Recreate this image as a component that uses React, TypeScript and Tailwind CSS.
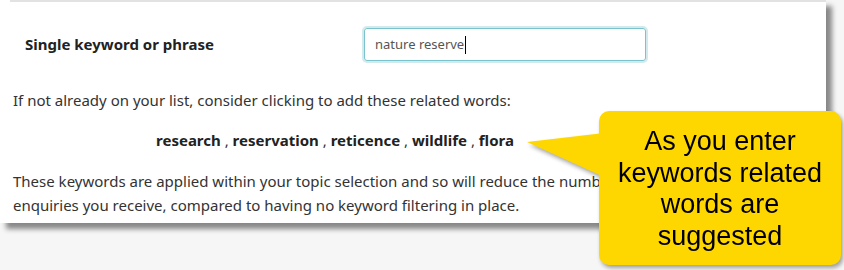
export default function App() {
  const keywords = ["research", "reservation", "reticence", "wildlife", "flora"];

  return (
    <div className="relative h-[270px] w-[844px] overflow-hidden bg-[#f6f6f6] font-['Noto_Sans',sans-serif] text-[15px] text-[#333]">
      {/* card */}
      <div className="w-[826px] bg-white shadow-[6px_6px_5px_rgba(0,0,0,0.45)]">
        <div className="ml-[10px] h-[2px] bg-[#e2e2e2]" />
        <div className="flex items-center pl-[25px] pt-[26px]">
          <label className="w-[339px] font-bold text-[#222]">Single keyword or phrase</label>
          <div className="flex h-[33px] w-[282px] items-center rounded-[3px] border border-[#78c3cc] px-[10px] text-[13px] text-[#555] shadow-[0_0_0_2px_#d3eaed]">
            nature reserve
            <span className="ml-px h-[18px] w-px bg-black" />
          </div>
        </div>
        <p className="mt-[27px] px-[13px] leading-[24px]">
          If not already on your list, consider clicking to add these related words:
        </p>
        <p className="mt-[16px] w-[670px] text-center leading-[24px]">
          {keywords.map((k, i) => (
            <span key={k}>
              <b className="font-bold text-[#222]">{k}</b>
              {i < keywords.length - 1 && " , "}
            </span>
          ))}
        </p>
        <p className="mt-[17px] whitespace-nowrap px-[13px] pb-[6px] leading-[24px]">
          These keywords are applied within your topic selection and so will reduce the number of
          <br />
          enquiries you receive, compared to having no keyword filtering in place.
        </p>
      </div>

      {/* callout */}
      <div className="absolute left-[526px] top-[111px] drop-shadow-[2px_3px_2px_rgba(0,0,0,0.35)]">
        <svg className="absolute left-0 top-[18px]" width="80" height="50" viewBox="0 0 80 50">
          <polygon points="1,13 78,4 78,48" fill="#ffd700" />
        </svg>
        <div className="ml-[73px] flex h-[154px] w-[242px] flex-col items-center rounded-[10px] bg-[#ffd700] pt-[15px] text-center font-['Liberation_Sans',Arial,sans-serif] text-[27px] leading-[31.7px] text-black">
          <span>As you enter</span>
          <span>keywords related</span>
          <span>words are</span>
          <span>suggested</span>
        </div>
      </div>
    </div>
  );
}
